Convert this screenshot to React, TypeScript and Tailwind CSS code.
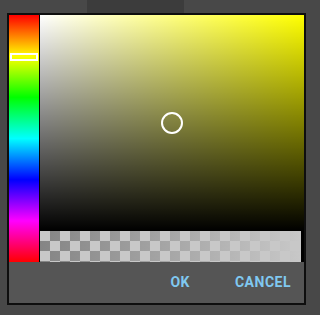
import React from 'react';

const hueGradient =
  'bg-[linear-gradient(to_bottom,#ff0000_0%,#ffff00_16.67%,#00ff00_33.33%,#00ffff_50%,#0000ff_66.67%,#ff00ff_83.33%,#ff0000_100%)]';

const ColorPickerDialog: React.FC = () => {
  return (
    <div className="w-[299px] h-[292px] ml-[7px] border-2 border-[#0e0e0e] bg-[#555555] flex flex-col">
      {/* Picker area */}
      <div className="flex h-[247px] bg-black">
        {/* Hue slider */}
        <div className={`relative w-[30px] h-full ${hueGradient}`}>
          <div className="absolute left-[1px] right-[1px] top-[38px] h-[8px] border-2 border-white" />
        </div>
        <div className="w-px h-full bg-black" />
        <div className="flex-1 flex flex-col">
          {/* Saturation / value */}
          <div className="relative h-[216px] bg-[#ffff00]">
            <div className="absolute inset-0 bg-[linear-gradient(to_right,#ffffff,rgba(255,255,255,0))]" />
            <div className="absolute inset-0 bg-[linear-gradient(to_bottom,rgba(0,0,0,0),#000000)]" />
            <div className="absolute left-[121px] top-[97px] w-[22px] h-[22px] rounded-full border-2 border-white" />
          </div>
          {/* Alpha strip */}
          <div className="h-[31px] mr-[3px] relative bg-[#c8c8c8] bg-[conic-gradient(#858585_25%,#c8c8c8_0_50%,#858585_0_75%,#c8c8c8_0)] bg-[length:20px_20px]">
            <div className="absolute inset-0 bg-[linear-gradient(to_right,rgba(200,200,200,0),rgba(200,200,200,1))]" />
          </div>
        </div>
      </div>
      {/* Buttons */}
      <div className="flex-1 flex items-center justify-end pr-[13px] pb-[1px] gap-[45px] font-['Roboto',sans-serif] font-bold text-[14px] text-[#80c8f0] tracking-[0.5px]">
        <button className="leading-none">OK</button>
        <button className="leading-none">CANCEL</button>
      </div>
    </div>
  );
};

export default function App() {
  return (
    <div className="w-[320px] h-[315px] bg-[#484848] overflow-hidden">
      <div className="h-[13px] flex">
        <div className="ml-[87px] w-[97px] h-full bg-[#3c3c3c]" />
      </div>
      <ColorPickerDialog />
    </div>
  );
}
